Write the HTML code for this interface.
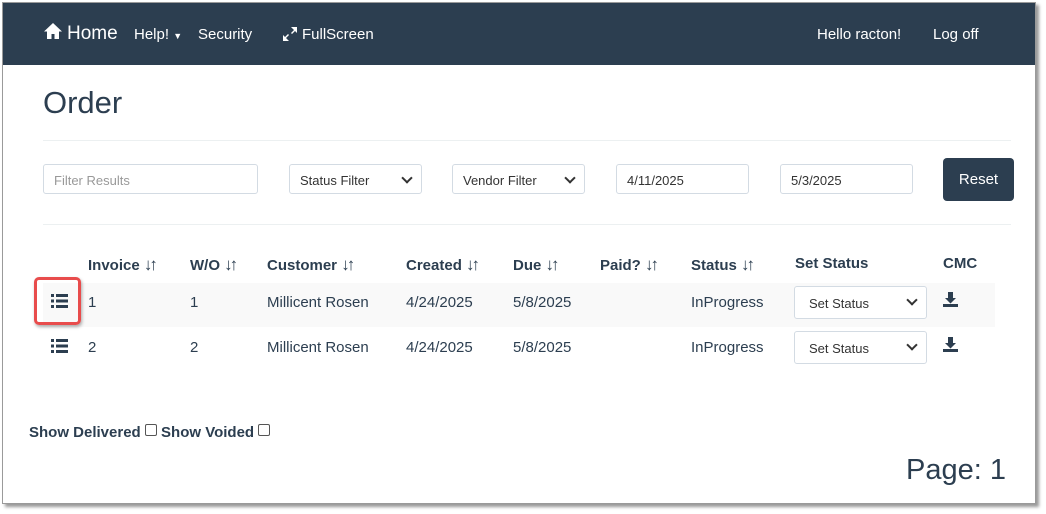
<!DOCTYPE html>
<html><head><style>
body{margin:0;width:1046px;height:514px;background:#fff;position:relative;overflow:hidden;font-family:"Liberation Sans",sans-serif;color:#2c3e50}
#win{position:absolute;left:2px;top:2px;width:1032px;height:500px;background:#fff;border:1px solid #9a9a9a;box-shadow:3px 3px 3px #999;overflow:hidden}
.nav{position:absolute;left:0;top:0;width:100%;height:62px;background:#2c3e50;color:#fff}
.a{position:absolute;white-space:nowrap}
.nav .a{font-size:15px;top:23px}
.inp{position:absolute;height:30px;border:1px solid #d3dbe3;border-radius:3px;box-sizing:border-box;font-size:13px;padding:8px 10px;background:#fff}
.sel:after{content:"";position:absolute;right:10px;top:9px;width:6px;height:6px;border-right:2px solid #333;border-bottom:2px solid #333;transform:rotate(45deg)}
.hr{position:absolute;left:40px;width:968px;height:1px;background:#ecf0f1}
.th{position:absolute;top:252px;font-weight:bold;font-size:15px}
.th b{letter-spacing:-3px;font-size:17px}
.td{position:absolute;font-size:15px}
.row{position:absolute;left:40px;width:952px;height:44px}
</style></head><body>
<div id="win">
<div class="nav">
<svg class="a" style="left:40px;top:19px" width="20" height="18" viewBox="0 0 20 18"><path d="M10 1L1 9.5h3V17h4.5v-5h3v5H16V9.5h3z" fill="#fff"/></svg>
<div class="a" style="left:64px;top:20px;font-size:19px">Home</div>
<div class="a" style="left:131px">Help! <span style="font-size:9px">▼</span></div>
<div class="a" style="left:195px">Security</div>
<svg class="a" style="left:279px;top:23px" width="16" height="16" viewBox="0 0 16 16"><path d="M9 1h6v6l-2-2-3 3-1-1 3-3zM7 15H1V9l2 2 3-3 1 1-3 3z" fill="#fff"/></svg>
<div class="a" style="left:299px">FullScreen</div>
<div class="a" style="left:814px">Hello racton!</div>
<div class="a" style="left:930px">Log off</div>
</div>
<div class="a" style="left:40px;top:82px;font-size:31px">Order</div>
<div class="hr" style="top:137px"></div>
<div class="inp" style="left:40px;top:161px;width:215px;color:#999">Filter Results</div>
<div class="inp sel" style="left:286px;top:161px;width:133px;color:#333">Status Filter</div>
<div class="inp sel" style="left:449px;top:161px;width:133px;color:#333">Vendor Filter</div>
<div class="inp" style="left:613px;top:161px;width:133px;color:#333">4/11/2025</div>
<div class="inp" style="left:777px;top:161px;width:133px;color:#333">5/3/2025</div>
<div class="a" style="left:940px;top:155px;width:71px;height:43px;background:#2c3e50;border-radius:4px;color:#fff;font-size:15px;text-align:center;line-height:43px">Reset</div>
<div class="hr" style="top:221px"></div>
<div class="th" style="left:85px">Invoice <b>↓↑</b></div>
<div class="th" style="left:187px">W/O <b>↓↑</b></div>
<div class="th" style="left:264px">Customer <b>↓↑</b></div>
<div class="th" style="left:403px">Created <b>↓↑</b></div>
<div class="th" style="left:510px">Due <b>↓↑</b></div>
<div class="th" style="left:597px">Paid? <b>↓↑</b></div>
<div class="th" style="left:688px">Status <b>↓↑</b></div>
<div class="th" style="left:792px">Set Status</div>
<div class="th" style="left:940px">CMC</div>
<div class="row" style="top:280px;background:#f9f9f9"></div>
<div class="a" style="left:31px;top:274px;width:47px;height:48px;border:3px solid #e84c4c;border-radius:5px;box-sizing:border-box;box-shadow:1px 2px 3px #aaa"></div>
<svg class="a" style="left:48px;top:291px" width="17" height="14" viewBox="0 0 17 14"><path d="M0 0h3v3H0zM5 0h12v3H5zM0 5.5h3v3H0zM5 5.5h12v3H5zM0 11h3v3H0zM5 11h12v3H5z" fill="#2c3e50"/></svg>
<svg class="a" style="left:48px;top:336px" width="17" height="14" viewBox="0 0 17 14"><path d="M0 0h3v3H0zM5 0h12v3H5zM0 5.5h3v3H0zM5 5.5h12v3H5zM0 11h3v3H0zM5 11h12v3H5z" fill="#2c3e50"/></svg>
<div class="td" style="left:85px;top:291px">1</div><div class="td" style="left:187px;top:291px">1</div><div class="td" style="left:264px;top:291px">Millicent Rosen</div><div class="td" style="left:403px;top:291px">4/24/2025</div><div class="td" style="left:510px;top:291px">5/8/2025</div><div class="td" style="left:688px;top:291px">InProgress</div>
<div class="td" style="left:85px;top:336px">2</div><div class="td" style="left:187px;top:336px">2</div><div class="td" style="left:264px;top:336px">Millicent Rosen</div><div class="td" style="left:403px;top:336px">4/24/2025</div><div class="td" style="left:510px;top:336px">5/8/2025</div><div class="td" style="left:688px;top:336px">InProgress</div>
<div class="inp sel" style="left:791px;top:283px;width:133px;height:33px;color:#333;padding:9px 14px">Set Status</div>
<div class="inp sel" style="left:791px;top:328px;width:133px;height:33px;color:#333;padding:9px 14px">Set Status</div>
<svg class="a" style="left:940px;top:289px" width="15" height="15" viewBox="0 0 15 15"><path d="M5 0h5v6h3l-5.5 5.5L2 6h3zM0 12h15v3H0z" fill="#2c3e50"/></svg>
<svg class="a" style="left:940px;top:334px" width="15" height="15" viewBox="0 0 15 15"><path d="M5 0h5v6h3l-5.5 5.5L2 6h3zM0 12h15v3H0z" fill="#2c3e50"/></svg>
<div class="a" style="left:26px;top:421px;font-size:15px;font-weight:bold">Show Delivered <span style="display:inline-block;width:10px;height:10px;border:1px solid #555;border-radius:2px;vertical-align:1px"></span> Show Voided <span style="display:inline-block;width:10px;height:10px;border:1px solid #555;border-radius:2px;vertical-align:1px"></span></div>
<div class="a" style="left:903px;top:451px;font-size:29px">Page: 1</div>
</div>
</body></html>
